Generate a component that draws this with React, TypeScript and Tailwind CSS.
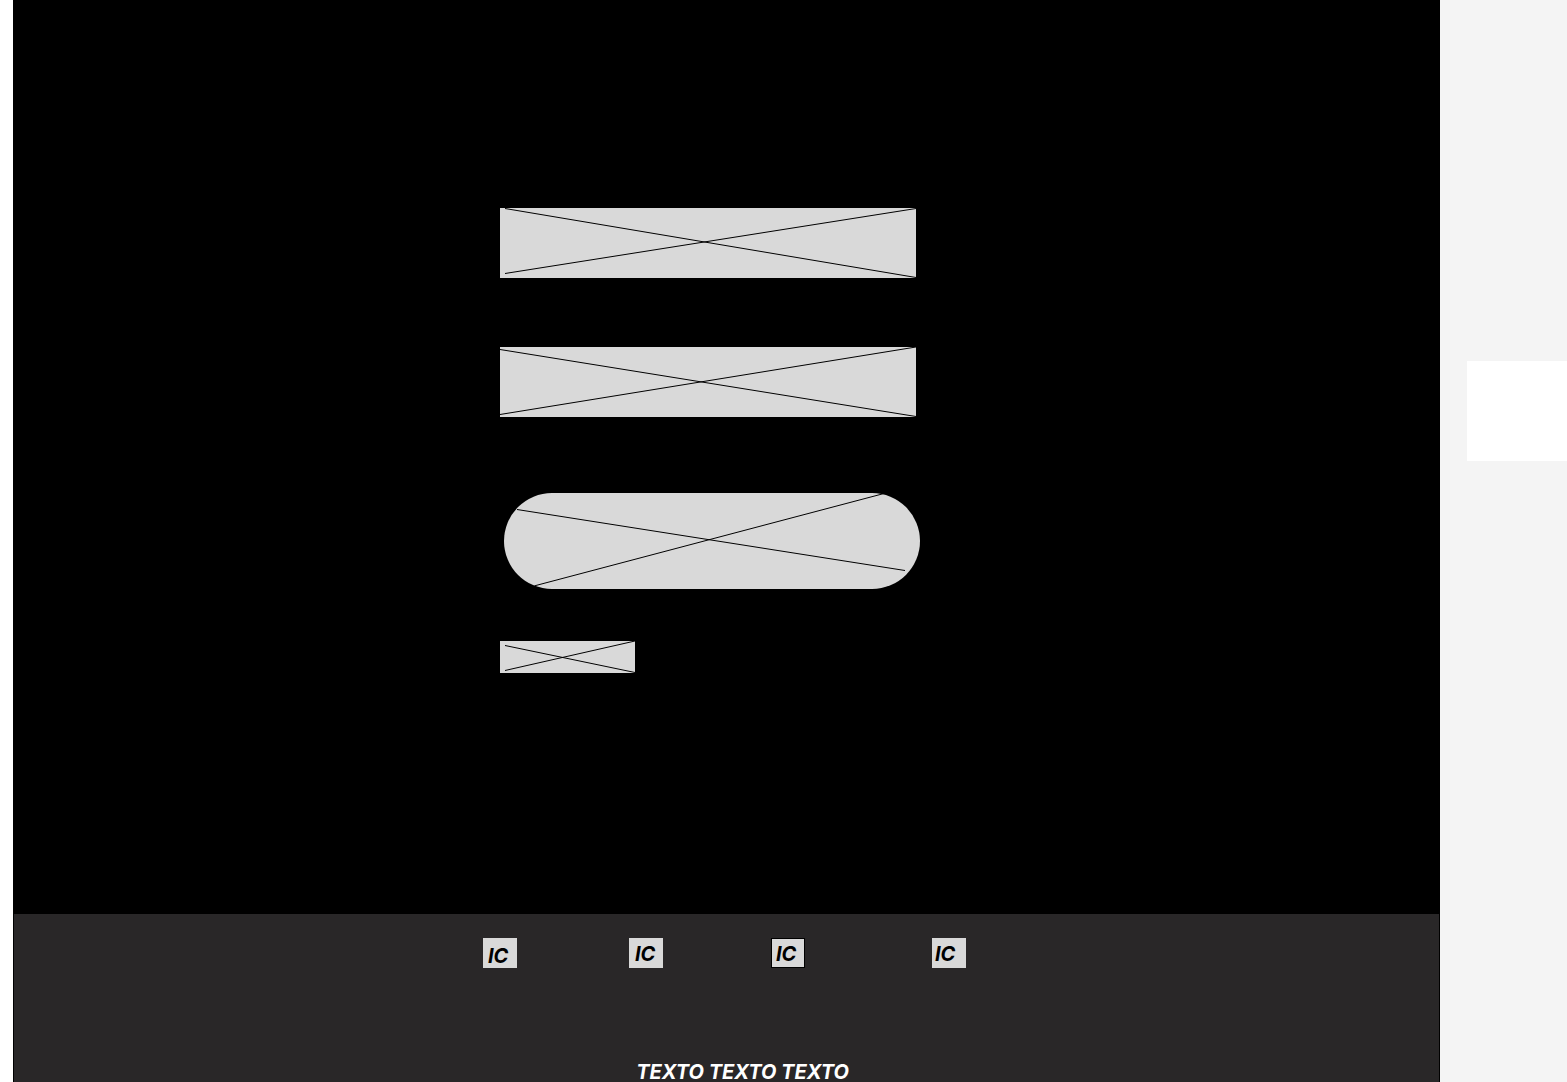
import React from "react";

type Line = [number, number, number, number];

function Cross({ width, height, lines }: { width: number; height: number; lines: Line[] }) {
  return (
    <svg
      aria-hidden="true"
      className="pointer-events-none absolute inset-0 h-full w-full"
      viewBox={`0 0 ${width} ${height}`}
      preserveAspectRatio="none"
    >
      {lines.map(([x1, y1, x2, y2], i) => (
        <line key={i} x1={x1} y1={y1} x2={x2} y2={y2} stroke="black" strokeWidth={1} />
      ))}
    </svg>
  );
}

function Field({ label, type, lines }: { label: string; type: string; lines: Line[] }) {
  return (
    <label className="relative block h-[70px] w-[416px]">
      <input
        type={type}
        aria-label={label}
        className="block h-full w-full bg-[#d9d9d9] px-4 text-black outline-none"
      />
      <Cross width={416} height={70} lines={lines} />
    </label>
  );
}

function IconLink({ className }: { className: string }) {
  return (
    <a
      href="#"
      className={`block h-[30px] w-[34px] bg-[#d9d9d9] text-xl font-bold text-black italic ${className}`}
    >
      IC
    </a>
  );
}

export default function App() {
  return (
    <div className="flex min-h-screen bg-white pl-[13px] font-['Inter',sans-serif]">
      <div className="flex flex-1 flex-col bg-black px-px">
        <main className="flex-1 pt-52 pb-60">
          <form className="mx-auto flex w-full max-w-[453px] flex-col items-start">
            <Field
              label="Usuario"
              type="text"
              lines={[
                [5, 0.5, 416, 69.5],
                [5, 65.5, 416, 0.5],
              ]}
            />
            <div className="mt-[69px]">
              <Field
                label="Contraseña"
                type="password"
                lines={[
                  [0, 2.5, 416, 69.5],
                  [0, 67.5, 416, 0],
                ]}
              />
            </div>
            <button
              type="button"
              aria-label="Entrar"
              className="relative mt-[76px] ml-1 h-24 w-[416px] overflow-hidden rounded-full bg-[#d9d9d9]"
            >
              <Cross
                width={416}
                height={96}
                lines={[
                  [13, 16.5, 401, 77.5],
                  [28, 93.5, 380, 0.5],
                ]}
              />
            </button>
            <a href="#" aria-label="Ayuda" className="relative mt-[52px] block h-8 w-[135px] bg-[#d9d9d9]">
              <Cross
                width={135}
                height={32}
                lines={[
                  [5, 4.5, 135, 31.5],
                  [5, 29.5, 135, 0],
                ]}
              />
            </a>
          </form>
        </main>
        <footer className="bg-[#292728] pt-6">
          <nav className="mx-auto flex w-full max-w-[487px]">
            <IconLink className="pt-1 pl-[5px] leading-7" />
            <IconLink className="ml-28 pt-0.5 pl-1.5 leading-7" />
            <IconLink className="ml-[108px] border border-black pt-px pl-1 leading-7" />
            <IconLink className="ml-[127px] pt-0.5 pl-[3px] leading-7" />
          </nav>
          <p className="mt-[94px] pl-8 text-center text-xl leading-5 font-bold text-white italic">
            TEXTO TEXTO TEXTO
          </p>
        </footer>
      </div>
      <aside className="flex w-[127px] flex-col items-end bg-[#f4f4f4] pt-[361px]">
        <div className="h-[100px] w-[100px] bg-white" />
      </aside>
    </div>
  );
}
